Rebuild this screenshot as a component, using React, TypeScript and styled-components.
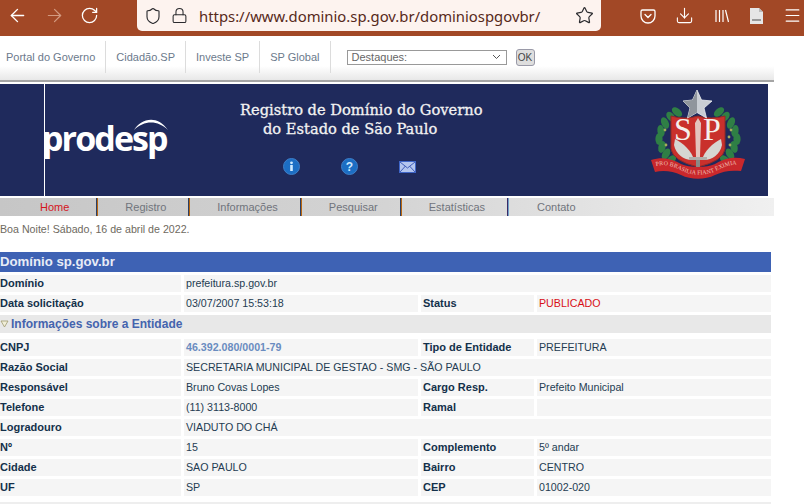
import styled, { createGlobalStyle } from "styled-components";
import {
  ArrowLeft,
  ArrowRight,
  RotateCw,
  Shield,
  Lock,
  Star,
  Download,
  Menu as MenuIcon,
} from "lucide-react";

const GlobalStyle = createGlobalStyle`
  html, body {
    margin: 0;
    padding: 0;
    background: #fff;
    overflow: hidden;
    font-family: "Liberation Sans", Arial, sans-serif;
  }
`;

const rows = [
  { a: "CNPJ", b: "46.392.080/0001-79", c: "Tipo de Entidade", d: "PREFEITURA", link: true },
  { a: "Razão Social", b: "SECRETARIA MUNICIPAL DE GESTAO - SMG - SÃO PAULO" },
  { a: "Responsável", b: "Bruno Covas Lopes", c: "Cargo Resp.", d: "Prefeito Municipal" },
  { a: "Telefone", b: "(11) 3113-8000", c: "Ramal", d: "" },
  { a: "Logradouro", b: "VIADUTO DO CHÁ" },
  { a: "Nº", b: "15", c: "Complemento", d: "5º andar" },
  { a: "Cidade", b: "SAO PAULO", c: "Bairro", d: "CENTRO" },
  { a: "UF", b: "SP", c: "CEP", d: "01002-020" },
];

const menuItems = [
  { label: "Home", active: true, sep: "#b8660f", edge: "#2a3f66" },
  { label: "Registro", sep: "#b8660f", edge: "#2a3f66" },
  { label: "Informações", sep: "#b8660f", edge: "#2a3f66" },
  { label: "Pesquisar", sep: "#b8660f", edge: "#2a3f66" },
  { label: "Estatísticas", sep: "#6fa0c8", edge: "#3a2a66" },
  { label: "Contato" },
];

// wreath leaves: [x, y, rotation], left side, mirrored for the right
const leaves = [
  [32, 27, -50],
  [26, 32, -40],
  [20, 38, -25],
  [16, 46, -10],
  [14, 54, 0],
  [17, 62, 15],
  [21, 69, 30],
  [26, 75, 50],
];

const Seal = () => (
  <svg width="110" height="105" viewBox="0 0 110 105">
    {leaves.map(([x, y, r]) => (
      <g key={`${x}-${y}`}>
        <ellipse cx={x} cy={y} rx="3.6" ry="6" fill="#2f7f45" transform={`rotate(${r} ${x} ${y})`} />
        <ellipse cx={106 - x} cy={y} rx="3.6" ry="6" fill="#2f7f45" transform={`rotate(${-r} ${106 - x} ${y})`} />
      </g>
    ))}
    <g fill="#a3ad5a">
      <circle cx="20" cy="45" r="1.400" />
      <circle cx="21" cy="60" r="1.400" />
      <circle cx="86" cy="45" r="1.400" />
      <circle cx="85" cy="60" r="1.400" />
      <circle cx="84" cy="52" r="1.400" />
    </g>
    <path d="M26 31 Q40 35 53 31 Q66 35 80 31 L80 64 Q78 76 53 82 Q28 76 26 64 Z" fill="#c9302c" stroke="#8f2a25" strokeWidth="1" />
    <text x="38" y="55" textAnchor="middle" fontFamily="'Liberation Serif', serif" fontSize="32" fill="#f4efec">S</text>
    <text x="67" y="55" textAnchor="middle" fontFamily="'Liberation Serif', serif" fontSize="32" fill="#f4efec">P</text>
    <path d="M30 54 C38 58 47 66 49 75 C40 76 31 70 29 60 Z" fill="#d6d6d2" />
    <path d="M76 54 C68 58 59 66 57 75 C66 76 75 70 77 60 Z" fill="#d6d6d2" />
    <path d="M50 38 L53 33 L56 38 L55 72 L51 72 Z" fill="#e3c4bd" />
    <path d="M44 72 H62 V75 H44 Z" fill="#b0aeaa" />
    <path d="M51 75 H55 V82 H51 Z" fill="#8a8a86" />
    <path d="M6 75 C18 71 28 74 36 79 C44 83 62 83 70 79 C78 74 88 71 100 74 L96 86 C86 85 78 86 70 90 C60 95 46 95 36 90 C28 86 18 85 10 87 Z" fill="#c9282c" />
    <path id="ribbon-line" d="M11 81 C24 78 32 84 42 88 C50 90 58 90 66 88 C76 84 84 78 96 80" fill="none" />
    <text fontFamily="'Liberation Serif', serif" fontSize="6" fill="#f0c0b8">
      <textPath href="#ribbon-line" textLength="84">PRO BRASILIA FIANT EXIMIA</textPath>
    </text>
    <path d="M52 5 L56.500 15 L67 16 L59 23 L61.500 33 L52 27.500 L42.500 33 L45 23 L38 16 L47.500 15 Z" fill="#c9ced4" stroke="#eceff2" strokeWidth=".8" />
    <path d="M52 5 L52 27.500 L42.500 33 L45 23 L38 16 L47.500 15 Z" fill="#8f959c" />
  </svg>
);

const App = () => {
  return (
    <>
      <GlobalStyle />
      <Toolbar>
        <ToolGroup>
          <ToolIcon $x={7}><ArrowLeft size={21} strokeWidth={1.6} color="#fff" /></ToolIcon>
          <ToolIcon $x={16}><ArrowRight size={21} strokeWidth={1.4} color="#d39a80" /></ToolIcon>
          <ToolIcon $x={15}><RotateCw size={19} strokeWidth={1.6} color="#fff" /></ToolIcon>
        </ToolGroup>
        <UrlBar>
          <Shield size={18} strokeWidth={1.5} color="#2a2a2e" />
          <Lock size={17} strokeWidth={1.5} color="#2a2a2e" />
          <UrlText>https://www.dominio.sp.gov.br/dominiospgovbr/</UrlText>
          <Star size={19} strokeWidth={1.5} color="#2a2a2e" />
        </UrlBar>
        <RightTools>
          <svg width="16" height="16" viewBox="0 0 16 16" fill="none" stroke="#fff" strokeWidth="1.3">
            <path d="M2.5 2h11A1.5 1.5 0 0 1 15 3.5V8a7 7 0 0 1-14 0V3.500A1.500 1.500 0 0 1 2.500 2Z" />
            <path d="M5 6.500l3 3 3-3" strokeLinecap="round" />
          </svg>
          <Download size={19} strokeWidth={1.4} color="#fff" />
          <svg width="16" height="16" viewBox="0 0 16 16" fill="none" stroke="#fff" strokeWidth="1.2">
            <path d="M2 2v12M5.500 2v12M9 2v12M11.500 2l3 12" />
          </svg>
          <svg width="15" height="18" viewBox="0 0 15 18">
            <path d="M1 1h9l4 4v12H1Z" fill="#e6e6e6" />
            <path d="M10 1l4 4h-4Z" fill="#bbb" />
            <rect x="3" y="12" width="9" height="2" fill="#999" />
          </svg>
          <MenuIcon size={19} strokeWidth={1.5} color="#fff" />
        </RightTools>
      </Toolbar>

      <Width774>
        <TopNav>
          <NavLink $first>Portal do Governo</NavLink>
          <NavLink>Cidadão.SP</NavLink>
          <NavLink>Investe SP</NavLink>
          <NavLink>SP Global</NavLink>
          <Highlights>
            <span>Destaques:</span>
            <svg width="9" height="6" viewBox="0 0 9 6" fill="none" stroke="#555" strokeWidth="1">
              <path d="M1 1l3.500 3.500L8 1" />
            </svg>
          </Highlights>
          <OkButton>OK</OkButton>
        </TopNav>

        <Banner>
          <BannerLine />
          <LogoBox>
            <LogoArc width="34" height="14" viewBox="0 0 34 14" fill="#fff">
              <path d="M0 13 C6 3 22 -4 34 13 C24 3 10 3 0 13Z" />
            </LogoArc>
            <LogoText>prodesp</LogoText>
          </LogoBox>
          <BannerCenter>
            <BannerTitle>
              Registro de Domínio do Governo
              <br />
              <BannerTitleIndent>do Estado de São Paulo</BannerTitleIndent>
            </BannerTitle>
            <BannerIcons>
              <svg width="17" height="17" viewBox="0 0 17 17">
                <circle cx="8.500" cy="8.500" r="8" fill="#1c6ec4" stroke="#3f7fc8" />
                <rect x="7.200" y="7" width="2.600" height="6" fill="#cfeaff" />
                <circle cx="8.500" cy="4.800" r="1.400" fill="#cfeaff" />
              </svg>
              <svg width="17" height="17" viewBox="0 0 17 17">
                <circle cx="8.500" cy="8.500" r="8" fill="#1c6ec4" stroke="#3f7fc8" />
                <text x="8.500" y="13" textAnchor="middle" fontFamily="'Liberation Sans', sans-serif" fontWeight="bold" fontSize="12" fill="#cfeaff">?</text>
              </svg>
              <svg width="17" height="12" viewBox="0 0 17 12">
                <rect x=".5" y=".5" width="16" height="11" fill="#b4c6ee" stroke="#3f66c8" />
                <path d="M1 1l7.500 6L16 1M1 11l5.500-6M16 11l-5.500-6" fill="none" stroke="#3f5cb8" />
              </svg>
            </BannerIcons>
          </BannerCenter>
          <SealBox>
            <Seal />
          </SealBox>
        </Banner>

        <MainMenu>
          {menuItems.map((m) => (
            <MenuItem key={m.label} $active={m.active} $sep={m.sep} $edge={m.edge}>
              {m.label}
            </MenuItem>
          ))}
        </MainMenu>
      </Width774>

      <Greeting>Boa Noite! Sábado, 16 de abril de 2022.</Greeting>

      <Content>
        <TitleBar>Domínio sp.gov.br</TitleBar>
        <FormGrid>
          <Label>Domínio</Label>
          <Value $wide>prefeitura.sp.gov.br</Value>
          <Label>Data solicitação</Label>
          <Value>03/07/2007 15:53:18</Value>
          <Label $right>Status</Label>
          <Value $red>PUBLICADO</Value>
          <SectionHead>
            <svg width="10" height="8" viewBox="0 0 10 8">
              <path d="M1 1h7L4.500 7Z" fill="#f0eed8" stroke="#a09a70" strokeWidth=".8" />
            </svg>
            Informações sobre a Entidade
          </SectionHead>
          {rows.map((r) => (
            <FormRow key={r.a}>
              <Label>{r.a}</Label>
              <Value $wide={r.c === undefined} $link={r.link}>{r.b}</Value>
              {r.c !== undefined && <Label $right>{r.c}</Label>}
              {r.c !== undefined && <Value>{r.d}</Value>}
            </FormRow>
          ))}
          <Footer />
        </FormGrid>
      </Content>
    </>
  );
};

export default App;

const Toolbar = styled.div`
  height: 36px;
  background: #a24826;
  display: flex;
  align-items: flex-start;
`;

const ToolGroup = styled.div`
  width: 137px;
  height: 31px;
  display: flex;
  align-items: center;
`;

const ToolIcon = styled.span<{ $x: number }>`
  display: flex;
  margin-left: ${(p) => p.$x}px;
`;

const UrlBar = styled.div`
  width: 464px;
  height: 31px;
  box-sizing: border-box;
  background: #fdf3ef;
  border-radius: 0 0 5px 5px;
  display: flex;
  align-items: center;
  padding: 0 7px 0 7px;
  gap: 9px;
`;

const UrlText = styled.span`
  flex: 1;
  margin-left: 2px;
  font-family: "Noto Sans", sans-serif;
  font-size: 14.85px;
  color: #57291a;
  white-space: nowrap;
`;

const RightTools = styled.div`
  flex: 1;
  height: 31px;
  display: flex;
  align-items: center;
  justify-content: space-between;
  padding: 0 2px 0 39px;
`;

const Width774 = styled.div`
  width: 774px;
`;

const TopNav = styled.div`
  height: 46px;
  box-sizing: border-box;
  padding-top: 5px;
  padding-bottom: 7px;
  display: flex;
  align-items: stretch;
  background: linear-gradient(#fff 0, #fff 30px, #e6e6e6 45px);
  border-bottom: 2px solid #a5a5a5;
`;

const NavLink = styled.a<{ $first?: boolean }>`
  display: flex;
  align-items: center;
  padding: 0 10px 0 ${(p) => (p.$first ? 6 : 10)}px;
  font-size: 11px;
  color: #6c7a8c;
  border-right: 1px solid #dcdcdc;
  white-space: nowrap;
`;

const Highlights = styled.div`
  width: 160px;
  height: 15px;
  box-sizing: border-box;
  margin: 9px 0 0 16px;
  border: 1px solid #999;
  background: #fff;
  padding: 0 5px 1px 4px;
  display: flex;
  align-items: center;
  justify-content: space-between;
  font-size: 11px;
  color: #666;
`;

const OkButton = styled.button`
  width: 19px;
  height: 17px;
  box-sizing: border-box;
  margin: 8px 0 0 9px;
  padding: 0;
  border: 1px solid #9a9aa8;
  border-radius: 3px;
  background: #dedede;
  font-family: "Liberation Sans", sans-serif;
  font-size: 10px;
  color: #444;
`;

const Banner = styled.div`
  width: 768px;
  height: 112px;
  margin-top: 2px;
  background: #1f2a5c;
  display: flex;
`;

const BannerLine = styled.div`
  width: 1px;
  margin-left: 44px;
  background: #fff;
`;

const LogoBox = styled.div`
  position: relative;
  width: 123px;
  height: 112px;
`;

const LogoArc = styled.svg`
  position: absolute;
  left: 89px;
  top: 33px;
`;

const LogoText = styled.div`
  padding-top: 31px;
  margin-left: -3px;
  font-family: "Open Sans", sans-serif;
  font-size: 34px;
  font-weight: 700;
  letter-spacing: -1.9px;
  color: #fff;
`;

const BannerCenter = styled.div`
  width: 477px;
  padding: 16px 0 0 72px;
  box-sizing: border-box;
`;

const BannerTitle = styled.div`
  font-family: "DejaVu Serif", serif;
  font-size: 14.65px;
  line-height: 19px;
  color: #f2f2f2;
  white-space: nowrap;
  -webkit-text-stroke: 0.3px #f2f2f2;
`;

const BannerTitleIndent = styled.span`
  margin-left: 23px;
`;

const BannerIcons = styled.div`
  display: flex;
  align-items: center;
  gap: 41px;
  margin: 20px 0 0 43px;
`;

const SealBox = styled.div`
  padding-top: 1px;
`;

const MainMenu = styled.div`
  height: 18px;
  margin-top: 2px;
  display: flex;
  background: linear-gradient(90deg, #c6c6c6, #d4d4d4 50%, #f0f0f0);
`;

const MenuItem = styled.a<{ $active?: boolean; $sep?: string; $edge?: string }>`
  display: flex;
  align-items: center;
  box-sizing: border-box;
  padding: 0 23px 0 27px;
  font-size: 11px;
  color: ${(p) => (p.$active ? "#d4141c" : "#70747c")};
  border-right: 1px solid ${(p) => p.$sep ?? "transparent"};
  box-shadow: ${(p) => (p.$edge ? `inset -1px 0 0 ${p.$edge}` : "none")};
  &:first-child {
    padding-left: 40px;
    padding-right: 28px;
  }
  &:last-child {
    padding-left: 28px;
  }
`;

const Greeting = styled.div`
  height: 36px;
  padding-top: 7px;
  box-sizing: border-box;
  font-size: 10.67px;
  line-height: 13px;
  color: #6e6a60;
`;

const Content = styled.div`
  width: 771px;
`;

const TitleBar = styled.div`
  height: 20px;
  background: #3e62b4;
  color: #e8ecf6;
  font-size: 13.2px;
  font-weight: bold;
  line-height: 20px;
`;

const FormGrid = styled.div`
  display: grid;
  grid-template-columns: 181px 234px 113px 234px;
  gap: 3px;
  margin-top: 3px;
`;

const FormRow = styled.div`
  display: contents;
`;

const Cell = styled.div`
  height: 17px;
  box-sizing: border-box;
  background: #f5f5f5;
  line-height: 17px;
  white-space: nowrap;
`;

const Label = styled(Cell)<{ $right?: boolean }>`
  padding-left: ${(p) => (p.$right ? 2 : 0)}px;
  font-size: 11px;
  font-weight: bold;
  color: #13304a;
`;

const Value = styled(Cell)<{ $wide?: boolean; $red?: boolean; $link?: boolean }>`
  padding-left: 2px;
  grid-column: ${(p) => (p.$wide ? "span 3" : "auto")};
  font-size: 10.67px;
  color: ${(p) => (p.$red ? "#d80f16" : p.$link ? "#6a8cc0" : "#243c52")};
  font-weight: ${(p) => (p.$link ? "bold" : "normal")};
`;

const SectionHead = styled.div`
  grid-column: 1 / -1;
  height: 18px;
  margin-bottom: 3px;
  background: #e8e8e8;
  display: flex;
  align-items: center;
  gap: 1px;
  font-size: 12px;
  font-weight: bold;
  color: #4464ae;
`;

const Footer = styled.div`
  grid-column: 1 / -1;
  height: 17px;
  margin-top: 3px;
  background: #eee;
`;
